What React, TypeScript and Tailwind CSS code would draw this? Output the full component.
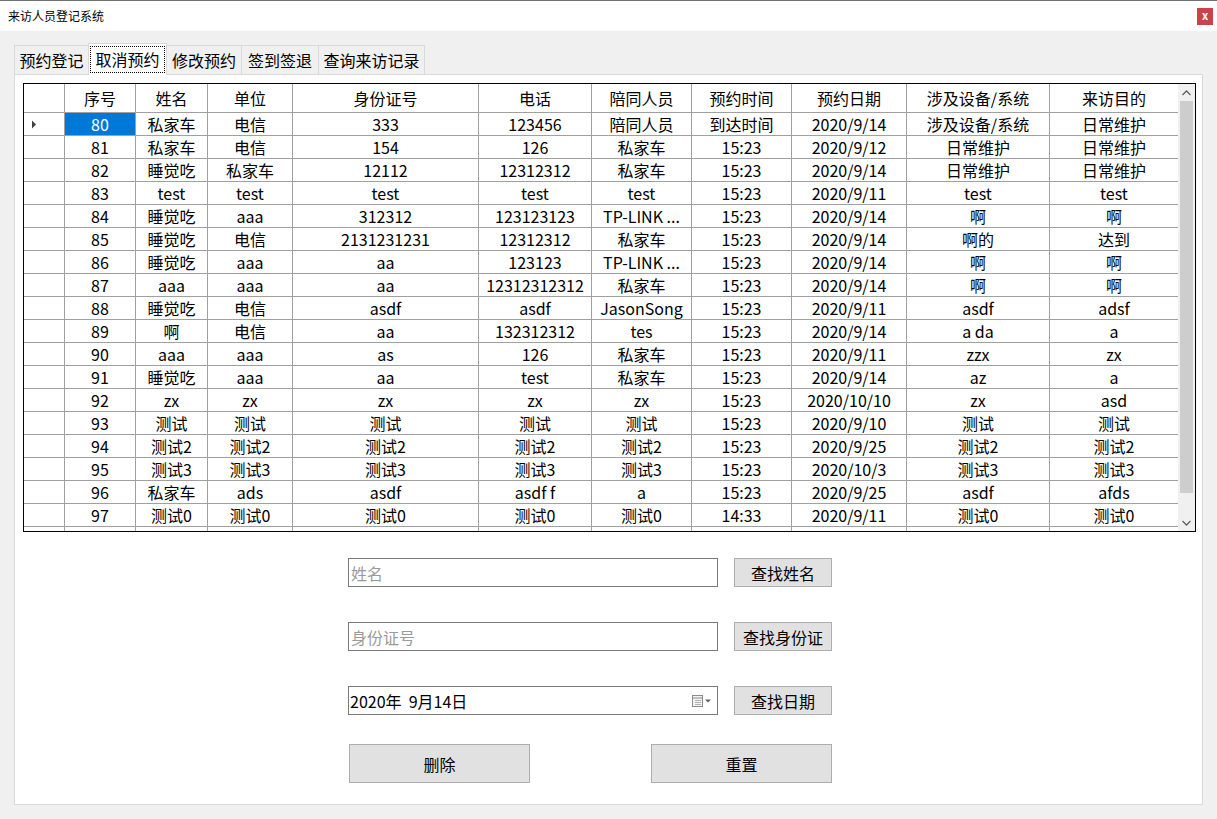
import React from "react";

const cols = [
  { key: "id", title: "序号", w: 71 },
  { key: "name", title: "姓名", w: 72 },
  { key: "unit", title: "单位", w: 85 },
  { key: "card", title: "身份证号", w: 186 },
  { key: "phone", title: "电话", w: 113 },
  { key: "mate", title: "陪同人员", w: 100 },
  { key: "time", title: "预约时间", w: 100 },
  { key: "date", title: "预约日期", w: 115 },
  { key: "device", title: "涉及设备/系统", w: 143 },
  { key: "purpose", title: "来访目的", w: 128 },
];

const rows: string[][] = [
  ["80", "私家车", "电信", "333", "123456", "陪同人员", "到达时间", "2020/9/14", "涉及设备/系统", "日常维护"],
  ["81", "私家车", "电信", "154", "126", "私家车", "15:23", "2020/9/12", "日常维护", "日常维护"],
  ["82", "睡觉吃", "私家车", "12112", "12312312", "私家车", "15:23", "2020/9/14", "日常维护", "日常维护"],
  ["83", "test", "test", "test", "test", "test", "15:23", "2020/9/11", "test", "test"],
  ["84", "睡觉吃", "aaa", "312312", "123123123", "TP-LINK ...", "15:23", "2020/9/14", "啊", "啊"],
  ["85", "睡觉吃", "电信", "2131231231", "12312312", "私家车", "15:23", "2020/9/14", "啊的", "达到"],
  ["86", "睡觉吃", "aaa", "aa", "123123", "TP-LINK ...", "15:23", "2020/9/14", "啊", "啊"],
  ["87", "aaa", "aaa", "aa", "12312312312", "私家车", "15:23", "2020/9/14", "啊", "啊"],
  ["88", "睡觉吃", "电信", "asdf", "asdf", "JasonSong", "15:23", "2020/9/11", "asdf", "adsf"],
  ["89", "啊", "电信", "aa", "132312312", "tes", "15:23", "2020/9/14", "a da", "a"],
  ["90", "aaa", "aaa", "as", "126", "私家车", "15:23", "2020/9/11", "zzx", "zx"],
  ["91", "睡觉吃", "aaa", "aa", "test", "私家车", "15:23", "2020/9/14", "az", "a"],
  ["92", "zx", "zx", "zx", "zx", "zx", "15:23", "2020/10/10", "zx", "asd"],
  ["93", "测试", "测试", "测试", "测试", "测试", "15:23", "2020/9/10", "测试", "测试"],
  ["94", "测试2", "测试2", "测试2", "测试2", "测试2", "15:23", "2020/9/25", "测试2", "测试2"],
  ["95", "测试3", "测试3", "测试3", "测试3", "测试3", "15:23", "2020/10/3", "测试3", "测试3"],
  ["96", "私家车", "ads", "asdf", "asdf f", "a", "15:23", "2020/9/25", "asdf", "afds"],
  ["97", "测试0", "测试0", "测试0", "测试0", "测试0", "14:33", "2020/9/11", "测试0", "测试0"],
  ["", "", "", "", "", "", "", "", "", ""],
];

const tabs = [
  { title: "预约登记", w: "w-[75px]" },
  { title: "取消预约", w: "w-[79px]" },
  { title: "修改预约", w: "w-[76px]" },
  { title: "签到签退", w: "w-[78px]" },
  { title: "查询来访记录", w: "w-[107px]" },
];

function Grid() {
  return (
    <div className="ml-[8px] mt-[8px] flex h-[449px] w-[1173px] overflow-hidden border border-black bg-white">
      <div className="w-[1154px] overflow-hidden">
        <div className="flex h-[29px] border-b border-[#a0a0a0]">
          <div className="w-[41px] shrink-0 border-r border-[#a0a0a0]" />
          {cols.map((c) => (
            <div
              key={c.key}
              style={{ width: c.w }}
              className="flex shrink-0 items-center justify-center border-r border-[#a0a0a0] text-black last:border-r-0"
            >
              {c.title}
            </div>
          ))}
        </div>
        {rows.map((r, i) => (
          <div key={i} className="flex h-[23px] border-b border-[#a0a0a0]">
            <div className="flex w-[41px] shrink-0 items-center border-r border-[#a0a0a0] pl-[7px]">
              {i === 0 && (
                <svg width="6" height="9" viewBox="0 0 6 9">
                  <path d="M1 0.5 L5 4.5 L1 8.5 Z" fill="#404040" />
                </svg>
              )}
            </div>
            {cols.map((c, j) => (
              <div
                key={c.key}
                style={{ width: c.w }}
                className={
                  "flex shrink-0 items-center justify-center whitespace-nowrap border-r border-[#a0a0a0] last:border-r-0 " +
                  (i === 0 && j === 0 ? "bg-[#0078d7] text-white" : "text-black")
                }
              >
                <span>{r[j]}</span>
              </div>
            ))}
          </div>
        ))}
      </div>
      <div className="flex w-[17px] shrink-0 flex-col bg-[#f0f0f0]">
        <div className="flex h-[17px] items-center justify-center">
          <svg width="9" height="6" viewBox="0 0 9 6">
            <path d="M0.5 5 L4.5 1 L8.5 5" stroke="#606060" strokeWidth="1.3" fill="none" />
          </svg>
        </div>
        <div className="mx-[2px] h-[392px] bg-[#cdcdcd]" />
        <div className="flex-1" />
        <div className="flex h-[17px] items-center justify-center">
          <svg width="9" height="6" viewBox="0 0 9 6">
            <path d="M0.5 1 L4.5 5 L8.5 1" stroke="#606060" strokeWidth="1.3" fill="none" />
          </svg>
        </div>
      </div>
    </div>
  );
}

function Btn({ children, className }: { children: React.ReactNode; className: string }) {
  return (
    <button
      type="button"
      className={"flex items-center justify-center border border-[#adadad] bg-[#e1e1e1] text-[16px] text-black " + className}
    >
      {children}
    </button>
  );
}

export default function App() {
  return (
    <div
      lang="zh-CN"
      className="h-[819px] w-[1217px] overflow-hidden bg-[#f0f0f0] text-[16px] text-black"
      style={{ fontFamily: '"Noto Sans CJK SC", "Noto Sans", sans-serif' }}
    >
      <div className="flex h-[31px] items-center justify-between border-t border-[#707070] bg-white pl-[8px] pr-[4px]">
        <span className="text-[12px]">来访人员登记系统</span>
        <div className="flex h-[17px] w-[16px] items-center justify-center bg-[#c9444a] pb-[2px] text-[11px] font-bold text-white">
          x
        </div>
      </div>
      <div className="pl-[14px] pt-[12px]">
        <div className="flex h-[31px] items-end">
          {tabs.map((t, i) =>
            i === 1 ? (
              <div
                key={t.title}
                className={
                  "relative z-10 -mb-[1px] -ml-[1px] flex h-[32px] items-center justify-center border border-b-0 border-[#d9d9d9] bg-white " +
                  t.w
                }
              >
                <div className="flex h-[27px] items-center border border-dotted border-black px-[4px] pb-[2px]">{t.title}</div>
              </div>
            ) : (
              <div
                key={t.title}
                className={
                  "flex h-[29px] items-center justify-center border border-b-0 border-[#d9d9d9] bg-[#f0f0f0] pb-[1px] " +
                  (i === 0 ? "" : "-ml-[1px] ") +
                  t.w
                }
              >
                {t.title}
              </div>
            )
          )}
        </div>
        <div className="h-[731px] w-[1189px] border border-[#d9d9d9] bg-white">
          <Grid />
          <div className="ml-[333px] mt-[26px] flex flex-col">
            <div className="flex items-center">
              <div className="flex h-[29px] w-[370px] items-center border border-[#7a7a7a] pl-[2px] text-[#9a9a9a]">姓名</div>
              <Btn className="ml-[16px] h-[29px] w-[98px]">查找姓名</Btn>
            </div>
            <div className="mt-[35px] flex items-center">
              <div className="flex h-[29px] w-[370px] items-center border border-[#7a7a7a] pl-[2px] text-[#9a9a9a]">身份证号</div>
              <Btn className="ml-[16px] h-[29px] w-[98px]">查找身份证</Btn>
            </div>
            <div className="mt-[35px] flex items-center">
              <div className="flex h-[29px] w-[370px] items-center justify-between border border-[#7a7a7a] pl-[1px] pr-[5px]">
                <span>2020年&nbsp;&nbsp;9月14日</span>
                <svg width="20" height="12" viewBox="0 0 20 12">
                  <rect x="0.5" y="0.5" width="10" height="11" fill="#f4f4f4" stroke="#8a8a8a" />
                  <line x1="1" y1="3" x2="10" y2="3" stroke="#8a8a8a" />
                  <path d="M3 5.5 H9 M3 7.5 H9 M3 9.5 H9" stroke="#b0b0b0" />
                  <path d="M13 4.5 L19 4.5 L16 7.5 Z" fill="#606060" />
                </svg>
              </div>
              <Btn className="ml-[16px] h-[29px] w-[98px]">查找日期</Btn>
            </div>
            <div className="mt-[29px] flex items-center">
              <Btn className="ml-[1px] h-[39px] w-[181px]">删除</Btn>
              <Btn className="ml-[121px] h-[39px] w-[181px]">重置</Btn>
            </div>
          </div>
        </div>
      </div>
    </div>
  );
}
